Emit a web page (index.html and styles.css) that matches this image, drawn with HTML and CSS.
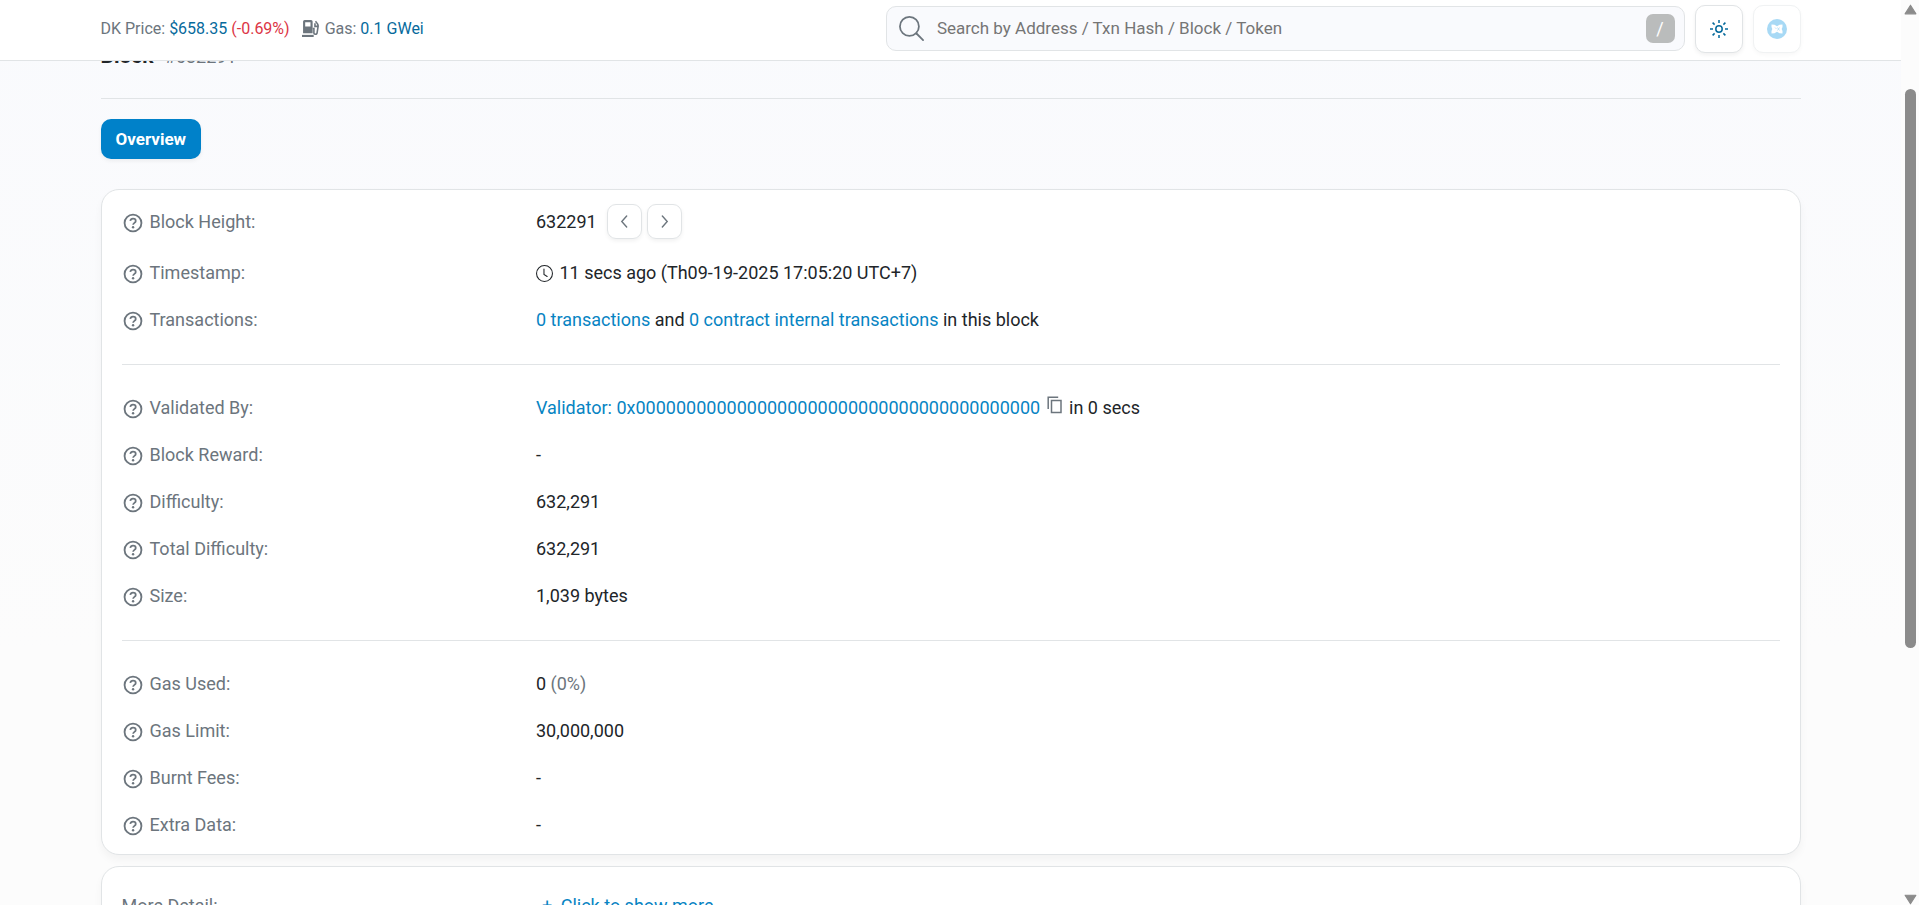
FILE: index.html
```
<!DOCTYPE html>
<html lang="en">
<head>
<meta charset="utf-8">
<title>Block #632291</title>
<link rel="stylesheet" href="styles.css">
</head>
<body>
<svg class="sprite" aria-hidden="true">
  <symbol id="help" viewBox="0 0 24 24">
    <circle cx="12" cy="12" r="9.2" fill="none" stroke="currentColor" stroke-width="2"/>
    <path d="M9 9.600c.300-1.500 1.400-2.400 3-2.400 1.800 0 3 1 3 2.500 0 2.100-2.700 2.200-2.900 4.200" fill="none" stroke="currentColor" stroke-width="1.900"/>
    <circle cx="12.100" cy="16.600" r="1.300" fill="currentColor"/>
  </symbol>
</svg>
<div class="viewport">
  <div class="page">
    <header class="topbar">
      <div class="container topbar-row">
        <div class="stats">
          <span>DK Price: <a class="stat-link" href="#">$658.35</a> <span class="down">(-0.69%)</span></span>
          <span class="gas">
            <svg class="gas-icon" viewBox="0 0 16 16" aria-hidden="true">
              <path fill="currentColor" fill-rule="evenodd" d="M2.500 0h6A1.500 1.500 0 0 1 10 1.500V12.500H1V1.500A1.500 1.500 0 0 1 2.500 0zM3 2v4h5V2z"/>
              <path fill="currentColor" d="M0 14h11v2H0z"/>
              <path fill="none" stroke="currentColor" stroke-width="1.500" d="M10 8h1.200v3.700a1.500 1.500 0 0 0 3 .500l1-6.500c.200-1.500-.700-2.500-2.500-4.500M12.200 3v3h2.500"/>
            </svg>
            <span>Gas: <a class="stat-link" href="#">0.1 GWei</a></span>
          </span>
        </div>
        <div class="tools">
          <form class="search" role="search">
            <svg class="search-icon" viewBox="0 0 24 24" aria-hidden="true"><g fill="none" stroke="currentColor" stroke-width="1.700" stroke-linecap="round"><circle cx="10" cy="10" r="9.100"/><path d="M16.800 16.800l6.300 6.300"/></g></svg>
            <input type="search" aria-label="Search" placeholder="Search by Address / Txn Hash / Block / Token">
            <kbd>/</kbd>
          </form>
          <button class="tool" type="button" aria-label="Theme">
            <svg class="sun" viewBox="0 0 18 18" aria-hidden="true"><g fill="none" stroke="currentColor" stroke-width="1.500"><circle cx="9" cy="9" r="3.200"/><path d="M9 0v3M9 15v3M0 9h3M15 9h3M2.600 2.600l2 2M13.400 13.400l2 2M15.400 2.600l-2 2M4.600 13.400l-2 2"/></g></svg>
          </button>
          <button class="tool tool-faded" type="button" aria-label="Network">
            <svg class="network" viewBox="0 0 20 20" aria-hidden="true"><circle cx="10" cy="10" r="10" fill="#0795e3"/><path fill="#fff" d="M4.500 5.500l3 .3 2.500 1.400 2.500-1.400 3-.3v2.500l-.8 2 .8 2v2.500l-3-.3-2.500-1.400-2.500 1.400-3 .3V12l.8-2-.8-2z"/><path fill="none" stroke="#0795e3" stroke-width=".7" d="M8 8.500l1.500 1.500M10.500 8.500l2 3M12.500 8.500l-2 3"/></svg>
          </button>
        </div>
      </div>
    </header>
    <main class="container">
      <h1>Block <span>#632291</span></h1>
      <nav class="tabs"><button class="tab" type="button">Overview</button></nav>
      <section class="card">
        <dl class="rows">
          <div class="row"><dt><svg class="help"><use href="#help"/></svg>Block Height:</dt>
            <dd class="height">632291
              <span class="pager">
                <button type="button" aria-label="Previous block"><svg viewBox="0 0 12 12"><path d="M8 1L3.500 6 8 11"/></svg></button>
                <button type="button" aria-label="Next block"><svg viewBox="0 0 12 12"><path d="M4 1l4.500 5L4 11"/></svg></button>
              </span></dd></div>
          <div class="row"><dt><svg class="help"><use href="#help"/></svg>Timestamp:</dt>
            <dd><svg class="clock" viewBox="0 0 16 16" aria-hidden="true"><g fill="none" stroke="currentColor" stroke-linecap="round"><circle cx="8" cy="8" r="7.500"/><path d="M7.500 3.800V9l3 1.800"/></g></svg> 11 secs ago (Th09-19-2025 17:05:20 UTC+7)</dd></div>
          <div class="row"><dt><svg class="help"><use href="#help"/></svg>Transactions:</dt>
            <dd><a href="#">0 transactions</a> and <a href="#">0 contract internal transactions</a> in this block</dd></div>
        </dl>
        <hr>
        <dl class="rows">
          <div class="row"><dt><svg class="help"><use href="#help"/></svg>Validated By:</dt>
            <dd><a href="#">Validator: 0x0000000000000000000000000000000000000000</a>
              <button class="copy" type="button" aria-label="Copy address"><svg viewBox="0 0 16 18"><path fill="none" stroke="currentColor" stroke-width="1.500" d="M1.200 13V1.200h10M4.500 4.500h9.500v12H4.500z"/></svg></button>
              in 0 secs</dd></div>
          <div class="row"><dt><svg class="help"><use href="#help"/></svg>Block Reward:</dt><dd>-</dd></div>
          <div class="row"><dt><svg class="help"><use href="#help"/></svg>Difficulty:</dt><dd>632,291</dd></div>
          <div class="row"><dt><svg class="help"><use href="#help"/></svg>Total Difficulty:</dt><dd>632,291</dd></div>
          <div class="row"><dt><svg class="help"><use href="#help"/></svg>Size:</dt><dd>1,039 bytes</dd></div>
        </dl>
        <hr>
        <dl class="rows">
          <div class="row"><dt><svg class="help"><use href="#help"/></svg>Gas Used:</dt><dd>0 <span class="muted">(0%)</span></dd></div>
          <div class="row"><dt><svg class="help"><use href="#help"/></svg>Gas Limit:</dt><dd>30,000,000</dd></div>
          <div class="row"><dt><svg class="help"><use href="#help"/></svg>Burnt Fees:</dt><dd>-</dd></div>
          <div class="row"><dt><svg class="help"><use href="#help"/></svg>Extra Data:</dt><dd>-</dd></div>
        </dl>
      </section>
      <section class="card more">
        <dl class="rows">
          <div class="row"><dt>More Detail:</dt><dd><a class="more-link" href="#"><span>+</span> Click to show more</a></dd></div>
        </dl>
      </section>
    </main>
  </div>
  <div class="scrollbar" aria-hidden="true">
    <svg class="arrow" viewBox="0 0 12 10"><path d="M6 1L11 9H1z"/></svg>
    <div class="track"><div class="thumb"></div></div>
    <svg class="arrow" viewBox="0 0 12 10"><path d="M6 9L1 1h10z"/></svg>
  </div>
</div>
</body>
</html>
```
FILE: styles.css
```
* { box-sizing: border-box; }
body {
  margin: 0;
  font: 18px/27px Roboto, sans-serif;
  color: #212529;
}
button, input, kbd { font: inherit; }
button { padding: 0; border: 0; background: none; }
a { color: #0784c3; text-decoration: none; }
dl, dd, h1 { margin: 0; }
.sprite { display: none; }
.muted { color: #6c757d; }

.viewport { display: flex; height: 100vh; overflow: hidden; }
.page {
  flex: 1;
  overflow: hidden;
  background: linear-gradient(#f9fafd, #fcfcfc 72%);
}
.container { width: 100%; max-width: 1740px; margin: 0 auto; padding: 0 20px; }

.topbar {
  position: relative;
  z-index: 1;
  background: #fff;
  border-bottom: 1px solid #e1e4e6;
}
.topbar-row { display: flex; justify-content: space-between; align-items: center; padding-top: 5px; padding-bottom: 7px; }
.stats { display: flex; gap: 12px; margin-bottom: 2px; font-size: 16px; color: #6c757d; }
.stat-link { color: #066a9c; }
.down { color: #dc3545; }
.gas { display: flex; align-items: center; gap: 6px; }
.gas-icon { width: 17px; height: 17px; }
.tools { display: flex; align-items: center; gap: 10px; width: 53.8%; }
.search {
  display: flex;
  align-items: center;
  flex: 1;
  height: 45px;
  margin-bottom: 2px;
  padding: 0 9px 0 12px;
  border: 1px solid #e1e4e6;
  border-radius: 10px;
  background: #f9fafd;
}
.search-icon { width: 25px; height: 25px; margin-right: 13px; color: #6c757d; }
.search input { flex: 1; padding: 0; border: 0; background: none; outline: 0; font-size: 17px; }
.search input::placeholder { color: #757575; opacity: 1; }
kbd { width: 29px; line-height: 29px; text-align: center; color: #fff; background: #babcbc; border-radius: 7px; }
.tool {
  display: grid;
  place-items: center;
  width: 48px;
  height: 48px;
  color: #066a9c;
  background: #fff;
  border: 1px solid #e1e4e6;
  border-radius: 10px;
  box-shadow: 0 2px 4px rgba(0, 0, 0, .06);
}
.tool-faded { border-color: #f0f2f3; box-shadow: 0 2px 4px rgba(0, 0, 0, .03); }
.sun { width: 18px; height: 18px; }
.network { width: 20px; height: 20px; opacity: .35; }

h1 {
  margin-top: -18px;
  padding-bottom: 28px;
  border-bottom: 1px solid #e1e4e6;
  font-size: 21px;
  font-weight: 700;
}
h1 span { margin-left: 6px; font-size: 18px; font-weight: 400; color: #6c757d; }
.tabs { padding: 20px 0 30px; }
.tab {
  display: block;
  height: 40px;
  padding: 0 15px;
  border-radius: 10px;
  background: #0081c9;
  color: #fff;
  font-size: 17px;
  font-weight: 700;
  box-shadow: 0 2px 4px rgba(0, 0, 0, .06);
}
.card {
  padding: 14px 20px 16px;
  border: 1px solid #e1e4e6;
  border-radius: 18px;
  background: #fff;
  box-shadow: 0 5px 8px rgba(0, 0, 0, .04);
}
.rows { display: grid; gap: 20px; }
.row { display: grid; grid-template-columns: 1fr 3fr; }
.row dt { display: flex; align-items: center; gap: 6px; color: #6c757d; }
.help { width: 22px; height: 22px; margin-top: 2px; }
hr { margin: 31px 0 29px; border: 0; border-top: 1px solid #e1e4e6; }
.height { display: flex; align-items: center; gap: 10px; }
.pager { display: flex; gap: 5px; }
.pager button {
  display: grid;
  place-items: center;
  width: 35px;
  height: 35px;
  border: 1px solid #e1e4e6;
  border-radius: 9px;
  box-shadow: 0 2px 4px rgba(0, 0, 0, .06);
}
.pager svg { width: 13px; height: 13px; fill: none; stroke: #6c757d; stroke-width: 1.3; stroke-linecap: round; }
.clock { width: 17px; height: 17px; margin-right: 2px; vertical-align: -3px; }
.copy { margin: 0 2px; color: #6c757d; }
.copy svg { display: block; width: 16px; height: 18px; }
.more { margin-top: 11px; padding-top: 25px; }
.more-link span { margin: 0 4px 0 6px; }

.scrollbar {
  display: flex;
  flex-direction: column;
  align-items: center;
  justify-content: space-between;
  width: 18px;
  padding: 4px 0 0;
  background: #fcfcfc;
}
.arrow { width: 13px; height: 11px; fill: #8b8b8b; stroke: #8b8b8b; stroke-linejoin: round; }
.track { flex: 1; width: 11px; padding-top: 74px; }
.thumb { height: 69.5%; border-radius: 6px; background: #8b8b8b; }
```
